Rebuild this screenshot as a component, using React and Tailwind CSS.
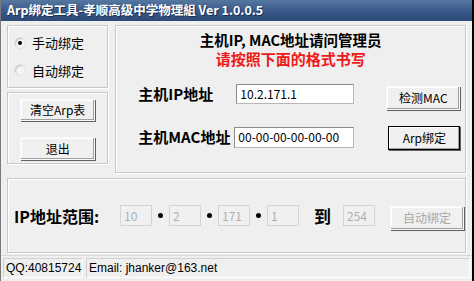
import React from 'react';

const cjk = { fontFamily: '"Noto Sans CJK SC", "Liberation Sans", sans-serif' };

const Group = ({ className = '', children }) => (
  <div className={`border border-[#c8c8c8] shadow-[inset_1px_1px_0_#ffffff,1px_1px_0_#ffffff] ${className}`}>
    {children}
  </div>
);

const Button = ({ children, className = '', strong, disabled }) => (
  <div
    className={`flex items-center justify-center bg-[#f0f0f0] text-[12px] ${
      strong ? 'border border-black' : 'border border-[#f8f8f8]'
    } shadow-[inset_-1px_-1px_0_#a0a0a0,inset_1px_1px_0_#ffffff,1px_1px_0_#606060] ${
      disabled ? 'text-[#a8a8a8]' : 'text-black'
    } ${className}`}
  >
    {children}
  </div>
);

const Field = ({ value, className = '', disabled }) => (
  <div
    className={`flex items-center px-[3px] text-[12px] border ${
      disabled
        ? 'bg-[#f0f0f0] border-[#d4d4d4] text-[#b0b0b0]'
        : 'bg-white border-[#b8b8b8] border-t-[#8a8a8a] border-l-[#8a8a8a] text-black'
    } ${className}`}
  >
    {value}
  </div>
);

const Radio = ({ checked, label }) => (
  <div className="flex items-center gap-[6px] text-[13px]">
    <div className="w-[12px] h-[12px] rounded-full bg-[#f4f4f4] border border-[#e0e0e0] shadow-[inset_1px_1px_1px_#c0c0c0] flex items-center justify-center">
      {checked && <div className="w-[4px] h-[4px] rounded-full bg-black" />}
    </div>
    <span>{label}</span>
  </div>
);

const Dot = () => <div className="w-[5px] h-[5px] rounded-full bg-black mx-[6px]" />;

export default function App() {
  return (
    <div style={cjk} className="w-[474px] h-[281px] bg-[#efefef] flex flex-col border-r-2 border-r-black border-l border-l-[#7a7a7a] overflow-hidden">
      <div className="h-[21px] shrink-0 bg-gradient-to-b from-[#56779f] via-[#3a5a8a] to-[#2c4a78] flex items-center px-[6px]">
        <span className="text-white font-bold text-[12.5px] [text-shadow:1px_1px_0_#1a2f52]">
          Arp绑定工具-孝顺高级中学物理組 Ver 1.0.0.5
        </span>
      </div>

      <div className="flex px-[6px] pt-[4px] gap-[7px]">
        <div className="w-[102px] flex flex-col gap-[4px]">
          <Group className="h-[63px] flex flex-col justify-center gap-[8px] pl-[6px]">
            <Radio checked label="手动绑定" />
            <Radio label="自动绑定" />
          </Group>
          <Group className="h-[72px] flex flex-col items-center pt-[6px] gap-[16px]">
            <Button className="w-[75px] h-[22px]">清空Arp表</Button>
            <Button className="w-[75px] h-[23px]">退出</Button>
          </Group>
        </div>

        <Group className="w-[353px] h-[148px] flex flex-col">
          <div className="text-center font-bold text-[14.5px] mt-[4px] leading-[20px]">
            主机IP, MAC地址请问管理员
          </div>
          <div className="text-center font-bold text-[15px] text-[#f01818] leading-[20px] mt-[-1px]">
            请按照下面的格式书写
          </div>
          <div className="flex items-center mt-[9px]">
            <span className="w-[120px] pl-[22px] font-bold text-[15px]">主机IP地址</span>
            <Field value="10.2.171.1" className="w-[118px] h-[20px]" />
            <Button className="w-[74px] h-[24px] ml-[32px] mt-[8px]">检测MAC</Button>
          </div>
          <div className="flex items-center mt-[14px]">
            <span className="w-[118px] pl-[22px] font-bold text-[15px]">主机MAC地址</span>
            <Field value="00-00-00-00-00-00" className="w-[120px] h-[21px]" />
            <Button strong className="w-[72px] h-[24px] ml-[34px] mt-[2px]">Arp绑定</Button>
          </div>
        </Group>
      </div>

      <div className="px-[6px] mt-[5px]">
        <Group className="h-[75px] flex items-center pl-[6px]">
          <span className="font-bold text-[16px] w-[106px]">IP地址范围:</span>
          <Field disabled value="10" className="w-[32px] h-[21px]" />
          <Dot />
          <Field disabled value="2" className="w-[32px] h-[21px]" />
          <Dot />
          <Field disabled value="171" className="w-[32px] h-[21px]" />
          <Dot />
          <Field disabled value="1" className="w-[32px] h-[21px]" />
          <span className="font-bold text-[17px] ml-[15px] w-[29px]">到</span>
          <Field disabled value="254" className="w-[32px] h-[21px]" />
          <Button disabled className="w-[74px] h-[24px] ml-[15px] mt-[4px]">自动绑定</Button>
        </Group>
      </div>

      <div className="mt-auto h-[26px] flex items-center gap-[3px] px-[2px] pb-[2px] text-[12px] border-t border-[#d8d8d8]">
        <div className="w-[80px] h-[20px] flex items-center pl-[2px] border border-[#d0d0d0] border-b-white border-r-white" style={{ fontFamily: '"Liberation Sans", sans-serif' }}>
          QQ:40815724
        </div>
        <div className="flex-1 h-[20px] flex items-center pl-[2px] border border-[#d0d0d0] border-b-white border-r-white" style={{ fontFamily: '"Liberation Sans", sans-serif' }}>
          Email: jhanker@163.net
        </div>
      </div>
    </div>
  );
}
